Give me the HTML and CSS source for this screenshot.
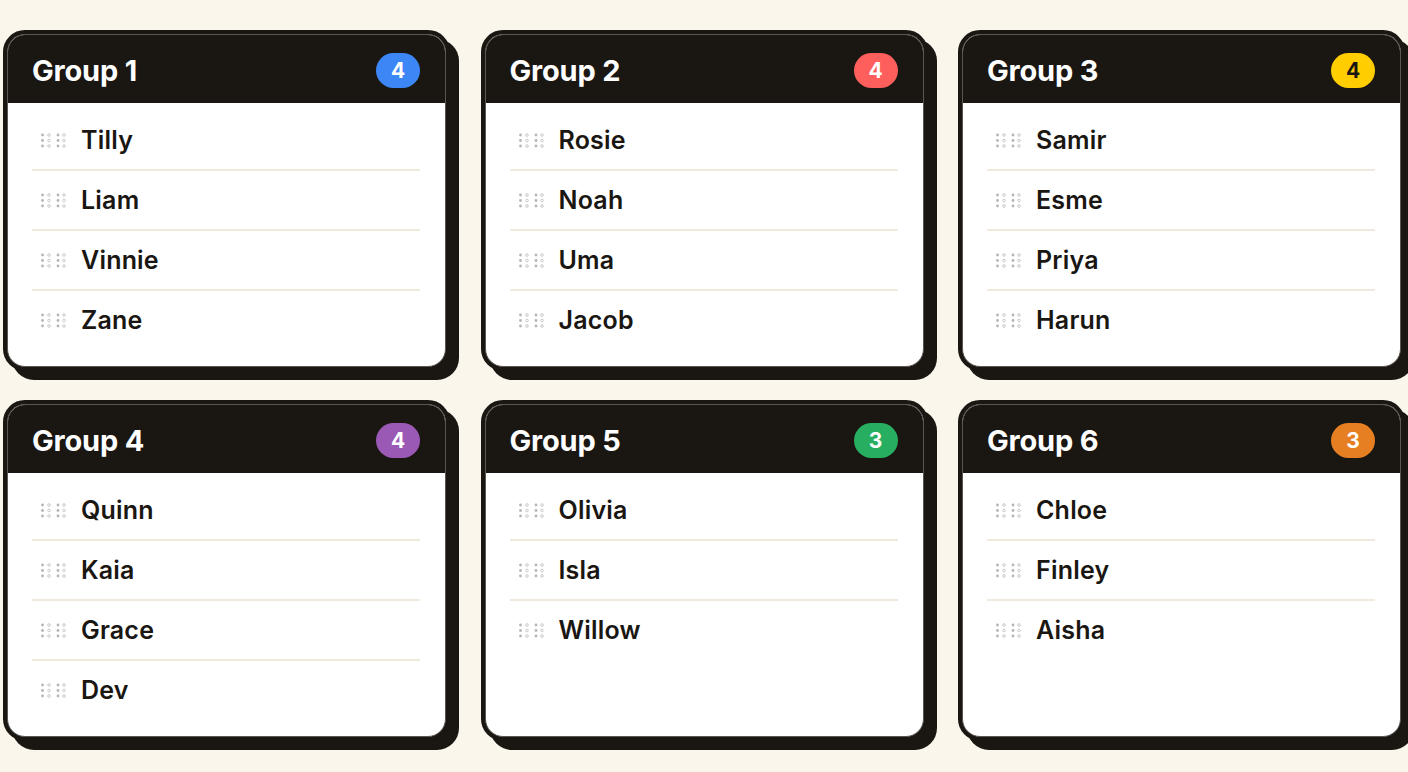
FILE: index.html
```html
<!DOCTYPE html>
<html lang="en">
<head>
<meta charset="utf-8">
<title>Groups</title>
<link rel="stylesheet" href="styles.css">
</head>
<body>
<main class="board">
  <section class="card">
    <div class="card-inner">
      <header class="card-head"><h2 class="card-title">Group 1</h2><span class="badge badge-blue">4</span></header>
      <ul class="members">
        <li class="member"><svg class="grip" viewBox="0 0 26 15"><circle class="f" cx="1.5" cy="2" r="1.4"/><circle class="h" cx="8" cy="2" r="1.3"/><circle class="f" cx="17" cy="2" r="1.4"/><circle class="h" cx="23" cy="2" r="1.3"/><circle class="f" cx="1.5" cy="7.5" r="1.4"/><circle class="h" cx="8" cy="7.5" r="1.3"/><circle class="f" cx="17" cy="7.5" r="1.4"/><circle class="h" cx="23" cy="7.5" r="1.3"/><circle class="f" cx="1.5" cy="13" r="1.4"/><circle class="h" cx="8" cy="13" r="1.3"/><circle class="f" cx="17" cy="13" r="1.4"/><circle class="h" cx="23" cy="13" r="1.3"/></svg><span class="name">Tilly</span></li>
        <li class="member"><svg class="grip" viewBox="0 0 26 15"><circle class="f" cx="1.5" cy="2" r="1.4"/><circle class="h" cx="8" cy="2" r="1.3"/><circle class="f" cx="17" cy="2" r="1.4"/><circle class="h" cx="23" cy="2" r="1.3"/><circle class="f" cx="1.5" cy="7.5" r="1.4"/><circle class="h" cx="8" cy="7.5" r="1.3"/><circle class="f" cx="17" cy="7.5" r="1.4"/><circle class="h" cx="23" cy="7.5" r="1.3"/><circle class="f" cx="1.5" cy="13" r="1.4"/><circle class="h" cx="8" cy="13" r="1.3"/><circle class="f" cx="17" cy="13" r="1.4"/><circle class="h" cx="23" cy="13" r="1.3"/></svg><span class="name">Liam</span></li>
        <li class="member"><svg class="grip" viewBox="0 0 26 15"><circle class="f" cx="1.5" cy="2" r="1.4"/><circle class="h" cx="8" cy="2" r="1.3"/><circle class="f" cx="17" cy="2" r="1.4"/><circle class="h" cx="23" cy="2" r="1.3"/><circle class="f" cx="1.5" cy="7.5" r="1.4"/><circle class="h" cx="8" cy="7.5" r="1.3"/><circle class="f" cx="17" cy="7.5" r="1.4"/><circle class="h" cx="23" cy="7.5" r="1.3"/><circle class="f" cx="1.5" cy="13" r="1.4"/><circle class="h" cx="8" cy="13" r="1.3"/><circle class="f" cx="17" cy="13" r="1.4"/><circle class="h" cx="23" cy="13" r="1.3"/></svg><span class="name">Vinnie</span></li>
        <li class="member"><svg class="grip" viewBox="0 0 26 15"><circle class="f" cx="1.5" cy="2" r="1.4"/><circle class="h" cx="8" cy="2" r="1.3"/><circle class="f" cx="17" cy="2" r="1.4"/><circle class="h" cx="23" cy="2" r="1.3"/><circle class="f" cx="1.5" cy="7.5" r="1.4"/><circle class="h" cx="8" cy="7.5" r="1.3"/><circle class="f" cx="17" cy="7.5" r="1.4"/><circle class="h" cx="23" cy="7.5" r="1.3"/><circle class="f" cx="1.5" cy="13" r="1.4"/><circle class="h" cx="8" cy="13" r="1.3"/><circle class="f" cx="17" cy="13" r="1.4"/><circle class="h" cx="23" cy="13" r="1.3"/></svg><span class="name">Zane</span></li>
      </ul>
    </div>
  </section>
  <section class="card">
    <div class="card-inner">
      <header class="card-head"><h2 class="card-title">Group 2</h2><span class="badge badge-red">4</span></header>
      <ul class="members">
        <li class="member"><svg class="grip" viewBox="0 0 26 15"><circle class="f" cx="1.5" cy="2" r="1.4"/><circle class="h" cx="8" cy="2" r="1.3"/><circle class="f" cx="17" cy="2" r="1.4"/><circle class="h" cx="23" cy="2" r="1.3"/><circle class="f" cx="1.5" cy="7.5" r="1.4"/><circle class="h" cx="8" cy="7.5" r="1.3"/><circle class="f" cx="17" cy="7.5" r="1.4"/><circle class="h" cx="23" cy="7.5" r="1.3"/><circle class="f" cx="1.5" cy="13" r="1.4"/><circle class="h" cx="8" cy="13" r="1.3"/><circle class="f" cx="17" cy="13" r="1.4"/><circle class="h" cx="23" cy="13" r="1.3"/></svg><span class="name">Rosie</span></li>
        <li class="member"><svg class="grip" viewBox="0 0 26 15"><circle class="f" cx="1.5" cy="2" r="1.4"/><circle class="h" cx="8" cy="2" r="1.3"/><circle class="f" cx="17" cy="2" r="1.4"/><circle class="h" cx="23" cy="2" r="1.3"/><circle class="f" cx="1.5" cy="7.5" r="1.4"/><circle class="h" cx="8" cy="7.5" r="1.3"/><circle class="f" cx="17" cy="7.5" r="1.4"/><circle class="h" cx="23" cy="7.5" r="1.3"/><circle class="f" cx="1.5" cy="13" r="1.4"/><circle class="h" cx="8" cy="13" r="1.3"/><circle class="f" cx="17" cy="13" r="1.4"/><circle class="h" cx="23" cy="13" r="1.3"/></svg><span class="name">Noah</span></li>
        <li class="member"><svg class="grip" viewBox="0 0 26 15"><circle class="f" cx="1.5" cy="2" r="1.4"/><circle class="h" cx="8" cy="2" r="1.3"/><circle class="f" cx="17" cy="2" r="1.4"/><circle class="h" cx="23" cy="2" r="1.3"/><circle class="f" cx="1.5" cy="7.5" r="1.4"/><circle class="h" cx="8" cy="7.5" r="1.3"/><circle class="f" cx="17" cy="7.5" r="1.4"/><circle class="h" cx="23" cy="7.5" r="1.3"/><circle class="f" cx="1.5" cy="13" r="1.4"/><circle class="h" cx="8" cy="13" r="1.3"/><circle class="f" cx="17" cy="13" r="1.4"/><circle class="h" cx="23" cy="13" r="1.3"/></svg><span class="name">Uma</span></li>
        <li class="member"><svg class="grip" viewBox="0 0 26 15"><circle class="f" cx="1.5" cy="2" r="1.4"/><circle class="h" cx="8" cy="2" r="1.3"/><circle class="f" cx="17" cy="2" r="1.4"/><circle class="h" cx="23" cy="2" r="1.3"/><circle class="f" cx="1.5" cy="7.5" r="1.4"/><circle class="h" cx="8" cy="7.5" r="1.3"/><circle class="f" cx="17" cy="7.5" r="1.4"/><circle class="h" cx="23" cy="7.5" r="1.3"/><circle class="f" cx="1.5" cy="13" r="1.4"/><circle class="h" cx="8" cy="13" r="1.3"/><circle class="f" cx="17" cy="13" r="1.4"/><circle class="h" cx="23" cy="13" r="1.3"/></svg><span class="name">Jacob</span></li>
      </ul>
    </div>
  </section>
  <section class="card">
    <div class="card-inner">
      <header class="card-head"><h2 class="card-title">Group 3</h2><span class="badge badge-yellow">4</span></header>
      <ul class="members">
        <li class="member"><svg class="grip" viewBox="0 0 26 15"><circle class="f" cx="1.5" cy="2" r="1.4"/><circle class="h" cx="8" cy="2" r="1.3"/><circle class="f" cx="17" cy="2" r="1.4"/><circle class="h" cx="23" cy="2" r="1.3"/><circle class="f" cx="1.5" cy="7.5" r="1.4"/><circle class="h" cx="8" cy="7.5" r="1.3"/><circle class="f" cx="17" cy="7.5" r="1.4"/><circle class="h" cx="23" cy="7.5" r="1.3"/><circle class="f" cx="1.5" cy="13" r="1.4"/><circle class="h" cx="8" cy="13" r="1.3"/><circle class="f" cx="17" cy="13" r="1.4"/><circle class="h" cx="23" cy="13" r="1.3"/></svg><span class="name">Samir</span></li>
        <li class="member"><svg class="grip" viewBox="0 0 26 15"><circle class="f" cx="1.5" cy="2" r="1.4"/><circle class="h" cx="8" cy="2" r="1.3"/><circle class="f" cx="17" cy="2" r="1.4"/><circle class="h" cx="23" cy="2" r="1.3"/><circle class="f" cx="1.5" cy="7.5" r="1.4"/><circle class="h" cx="8" cy="7.5" r="1.3"/><circle class="f" cx="17" cy="7.5" r="1.4"/><circle class="h" cx="23" cy="7.5" r="1.3"/><circle class="f" cx="1.5" cy="13" r="1.4"/><circle class="h" cx="8" cy="13" r="1.3"/><circle class="f" cx="17" cy="13" r="1.4"/><circle class="h" cx="23" cy="13" r="1.3"/></svg><span class="name">Esme</span></li>
        <li class="member"><svg class="grip" viewBox="0 0 26 15"><circle class="f" cx="1.5" cy="2" r="1.4"/><circle class="h" cx="8" cy="2" r="1.3"/><circle class="f" cx="17" cy="2" r="1.4"/><circle class="h" cx="23" cy="2" r="1.3"/><circle class="f" cx="1.5" cy="7.5" r="1.4"/><circle class="h" cx="8" cy="7.5" r="1.3"/><circle class="f" cx="17" cy="7.5" r="1.4"/><circle class="h" cx="23" cy="7.5" r="1.3"/><circle class="f" cx="1.5" cy="13" r="1.4"/><circle class="h" cx="8" cy="13" r="1.3"/><circle class="f" cx="17" cy="13" r="1.4"/><circle class="h" cx="23" cy="13" r="1.3"/></svg><span class="name">Priya</span></li>
        <li class="member"><svg class="grip" viewBox="0 0 26 15"><circle class="f" cx="1.5" cy="2" r="1.4"/><circle class="h" cx="8" cy="2" r="1.3"/><circle class="f" cx="17" cy="2" r="1.4"/><circle class="h" cx="23" cy="2" r="1.3"/><circle class="f" cx="1.5" cy="7.5" r="1.4"/><circle class="h" cx="8" cy="7.5" r="1.3"/><circle class="f" cx="17" cy="7.5" r="1.4"/><circle class="h" cx="23" cy="7.5" r="1.3"/><circle class="f" cx="1.5" cy="13" r="1.4"/><circle class="h" cx="8" cy="13" r="1.3"/><circle class="f" cx="17" cy="13" r="1.4"/><circle class="h" cx="23" cy="13" r="1.3"/></svg><span class="name">Harun</span></li>
      </ul>
    </div>
  </section>
  <section class="card">
    <div class="card-inner">
      <header class="card-head"><h2 class="card-title">Group 4</h2><span class="badge badge-purple">4</span></header>
      <ul class="members">
        <li class="member"><svg class="grip" viewBox="0 0 26 15"><circle class="f" cx="1.5" cy="2" r="1.4"/><circle class="h" cx="8" cy="2" r="1.3"/><circle class="f" cx="17" cy="2" r="1.4"/><circle class="h" cx="23" cy="2" r="1.3"/><circle class="f" cx="1.5" cy="7.5" r="1.4"/><circle class="h" cx="8" cy="7.5" r="1.3"/><circle class="f" cx="17" cy="7.5" r="1.4"/><circle class="h" cx="23" cy="7.5" r="1.3"/><circle class="f" cx="1.5" cy="13" r="1.4"/><circle class="h" cx="8" cy="13" r="1.3"/><circle class="f" cx="17" cy="13" r="1.4"/><circle class="h" cx="23" cy="13" r="1.3"/></svg><span class="name">Quinn</span></li>
        <li class="member"><svg class="grip" viewBox="0 0 26 15"><circle class="f" cx="1.5" cy="2" r="1.4"/><circle class="h" cx="8" cy="2" r="1.3"/><circle class="f" cx="17" cy="2" r="1.4"/><circle class="h" cx="23" cy="2" r="1.3"/><circle class="f" cx="1.5" cy="7.5" r="1.4"/><circle class="h" cx="8" cy="7.5" r="1.3"/><circle class="f" cx="17" cy="7.5" r="1.4"/><circle class="h" cx="23" cy="7.5" r="1.3"/><circle class="f" cx="1.5" cy="13" r="1.4"/><circle class="h" cx="8" cy="13" r="1.3"/><circle class="f" cx="17" cy="13" r="1.4"/><circle class="h" cx="23" cy="13" r="1.3"/></svg><span class="name">Kaia</span></li>
        <li class="member"><svg class="grip" viewBox="0 0 26 15"><circle class="f" cx="1.5" cy="2" r="1.4"/><circle class="h" cx="8" cy="2" r="1.3"/><circle class="f" cx="17" cy="2" r="1.4"/><circle class="h" cx="23" cy="2" r="1.3"/><circle class="f" cx="1.5" cy="7.5" r="1.4"/><circle class="h" cx="8" cy="7.5" r="1.3"/><circle class="f" cx="17" cy="7.5" r="1.4"/><circle class="h" cx="23" cy="7.5" r="1.3"/><circle class="f" cx="1.5" cy="13" r="1.4"/><circle class="h" cx="8" cy="13" r="1.3"/><circle class="f" cx="17" cy="13" r="1.4"/><circle class="h" cx="23" cy="13" r="1.3"/></svg><span class="name">Grace</span></li>
        <li class="member"><svg class="grip" viewBox="0 0 26 15"><circle class="f" cx="1.5" cy="2" r="1.4"/><circle class="h" cx="8" cy="2" r="1.3"/><circle class="f" cx="17" cy="2" r="1.4"/><circle class="h" cx="23" cy="2" r="1.3"/><circle class="f" cx="1.5" cy="7.5" r="1.4"/><circle class="h" cx="8" cy="7.5" r="1.3"/><circle class="f" cx="17" cy="7.5" r="1.4"/><circle class="h" cx="23" cy="7.5" r="1.3"/><circle class="f" cx="1.5" cy="13" r="1.4"/><circle class="h" cx="8" cy="13" r="1.3"/><circle class="f" cx="17" cy="13" r="1.4"/><circle class="h" cx="23" cy="13" r="1.3"/></svg><span class="name">Dev</span></li>
      </ul>
    </div>
  </section>
  <section class="card">
    <div class="card-inner">
      <header class="card-head"><h2 class="card-title">Group 5</h2><span class="badge badge-green">3</span></header>
      <ul class="members">
        <li class="member"><svg class="grip" viewBox="0 0 26 15"><circle class="f" cx="1.5" cy="2" r="1.4"/><circle class="h" cx="8" cy="2" r="1.3"/><circle class="f" cx="17" cy="2" r="1.4"/><circle class="h" cx="23" cy="2" r="1.3"/><circle class="f" cx="1.5" cy="7.5" r="1.4"/><circle class="h" cx="8" cy="7.5" r="1.3"/><circle class="f" cx="17" cy="7.5" r="1.4"/><circle class="h" cx="23" cy="7.5" r="1.3"/><circle class="f" cx="1.5" cy="13" r="1.4"/><circle class="h" cx="8" cy="13" r="1.3"/><circle class="f" cx="17" cy="13" r="1.4"/><circle class="h" cx="23" cy="13" r="1.3"/></svg><span class="name">Olivia</span></li>
        <li class="member"><svg class="grip" viewBox="0 0 26 15"><circle class="f" cx="1.5" cy="2" r="1.4"/><circle class="h" cx="8" cy="2" r="1.3"/><circle class="f" cx="17" cy="2" r="1.4"/><circle class="h" cx="23" cy="2" r="1.3"/><circle class="f" cx="1.5" cy="7.5" r="1.4"/><circle class="h" cx="8" cy="7.5" r="1.3"/><circle class="f" cx="17" cy="7.5" r="1.4"/><circle class="h" cx="23" cy="7.5" r="1.3"/><circle class="f" cx="1.5" cy="13" r="1.4"/><circle class="h" cx="8" cy="13" r="1.3"/><circle class="f" cx="17" cy="13" r="1.4"/><circle class="h" cx="23" cy="13" r="1.3"/></svg><span class="name">Isla</span></li>
        <li class="member"><svg class="grip" viewBox="0 0 26 15"><circle class="f" cx="1.5" cy="2" r="1.4"/><circle class="h" cx="8" cy="2" r="1.3"/><circle class="f" cx="17" cy="2" r="1.4"/><circle class="h" cx="23" cy="2" r="1.3"/><circle class="f" cx="1.5" cy="7.5" r="1.4"/><circle class="h" cx="8" cy="7.5" r="1.3"/><circle class="f" cx="17" cy="7.5" r="1.4"/><circle class="h" cx="23" cy="7.5" r="1.3"/><circle class="f" cx="1.5" cy="13" r="1.4"/><circle class="h" cx="8" cy="13" r="1.3"/><circle class="f" cx="17" cy="13" r="1.4"/><circle class="h" cx="23" cy="13" r="1.3"/></svg><span class="name">Willow</span></li>
      </ul>
    </div>
  </section>
  <section class="card">
    <div class="card-inner">
      <header class="card-head"><h2 class="card-title">Group 6</h2><span class="badge badge-orange">3</span></header>
      <ul class="members">
        <li class="member"><svg class="grip" viewBox="0 0 26 15"><circle class="f" cx="1.5" cy="2" r="1.4"/><circle class="h" cx="8" cy="2" r="1.3"/><circle class="f" cx="17" cy="2" r="1.4"/><circle class="h" cx="23" cy="2" r="1.3"/><circle class="f" cx="1.5" cy="7.5" r="1.4"/><circle class="h" cx="8" cy="7.5" r="1.3"/><circle class="f" cx="17" cy="7.5" r="1.4"/><circle class="h" cx="23" cy="7.5" r="1.3"/><circle class="f" cx="1.5" cy="13" r="1.4"/><circle class="h" cx="8" cy="13" r="1.3"/><circle class="f" cx="17" cy="13" r="1.4"/><circle class="h" cx="23" cy="13" r="1.3"/></svg><span class="name">Chloe</span></li>
        <li class="member"><svg class="grip" viewBox="0 0 26 15"><circle class="f" cx="1.5" cy="2" r="1.4"/><circle class="h" cx="8" cy="2" r="1.3"/><circle class="f" cx="17" cy="2" r="1.4"/><circle class="h" cx="23" cy="2" r="1.3"/><circle class="f" cx="1.5" cy="7.5" r="1.4"/><circle class="h" cx="8" cy="7.5" r="1.3"/><circle class="f" cx="17" cy="7.5" r="1.4"/><circle class="h" cx="23" cy="7.5" r="1.3"/><circle class="f" cx="1.5" cy="13" r="1.4"/><circle class="h" cx="8" cy="13" r="1.3"/><circle class="f" cx="17" cy="13" r="1.4"/><circle class="h" cx="23" cy="13" r="1.3"/></svg><span class="name">Finley</span></li>
        <li class="member"><svg class="grip" viewBox="0 0 26 15"><circle class="f" cx="1.5" cy="2" r="1.4"/><circle class="h" cx="8" cy="2" r="1.3"/><circle class="f" cx="17" cy="2" r="1.4"/><circle class="h" cx="23" cy="2" r="1.3"/><circle class="f" cx="1.5" cy="7.5" r="1.4"/><circle class="h" cx="8" cy="7.5" r="1.3"/><circle class="f" cx="17" cy="7.5" r="1.4"/><circle class="h" cx="23" cy="7.5" r="1.3"/><circle class="f" cx="1.5" cy="13" r="1.4"/><circle class="h" cx="8" cy="13" r="1.3"/><circle class="f" cx="17" cy="13" r="1.4"/><circle class="h" cx="23" cy="13" r="1.3"/></svg><span class="name">Aisha</span></li>
      </ul>
    </div>
  </section>
</main>
</body>
</html>
```
FILE: styles.css
```css
* { box-sizing: border-box; }

html, body {
  margin: 0;
  padding: 0;
  background: #faf6ec;
  overflow: hidden;
}

body {
  font-family: Inter, "Noto Sans", "DejaVu Sans", sans-serif;
  color: #1a1612;
  width: 1408px;
  height: 772px;
}

.board {
  display: grid;
  grid-template-columns: repeat(3, 447px);
  column-gap: 30.5px;
  row-gap: 29px;
  padding: 30px 0 0 3px;
  width: 1450px;
}

.card {
  display: flex;
  flex-direction: column;
  background: #1a1612;
  border: 4px solid #1a1612;
  border-radius: 22px;
  box-shadow: 9px 9px 0 #1a1612;
}

.card-inner {
  flex: 1;
  display: flex;
  flex-direction: column;
  border: 1px solid #5a5650;
  border-radius: 18px;
  overflow: hidden;
  background: #ffffff;
}

.card-head {
  height: 68px;
  flex: none;
  display: flex;
  align-items: center;
  justify-content: space-between;
  padding: 3px 25px 0 24px;
  background: #1a1612;
}

.card-title {
  margin: 0;
  font-size: 29px;
  font-weight: 700;
  color: #ffffff;
  letter-spacing: -0.2px;
}

.badge {
  width: 44px;
  height: 35px;
  border-radius: 18px;
  display: flex;
  align-items: center;
  justify-content: center;
  font-size: 21px;
  font-weight: 700;
  color: #ffffff;
}

.badge-blue { background: #3d86f6; }
.badge-red { background: #ff5f5c; }
.badge-yellow { background: #ffcd00; color: #1a1612; }
.badge-purple { background: #9b59b6; }
.badge-green { background: #27ae60; }
.badge-orange { background: #e67e22; }

.members {
  list-style: none;
  margin: 0;
  padding: 8px 25px 17px 24px;
  flex: 1;
}

.member {
  height: 60px;
  display: flex;
  align-items: center;
  gap: 14px;
  padding-left: 9px;
  border-bottom: 2px solid #efeadd;
}

.member:last-child {
  border-bottom: none;
  height: 58px;
}

.grip {
  width: 26px;
  height: 15px;
  flex: none;
}

.grip .f { fill: #b5b5b5; }
.grip .h { fill: none; stroke: #c4c4c4; stroke-width: 0.9; }

.name {
  font-size: 25px;
  font-weight: 560;
  letter-spacing: 0.2px;
  color: #1a1612;
}
```
